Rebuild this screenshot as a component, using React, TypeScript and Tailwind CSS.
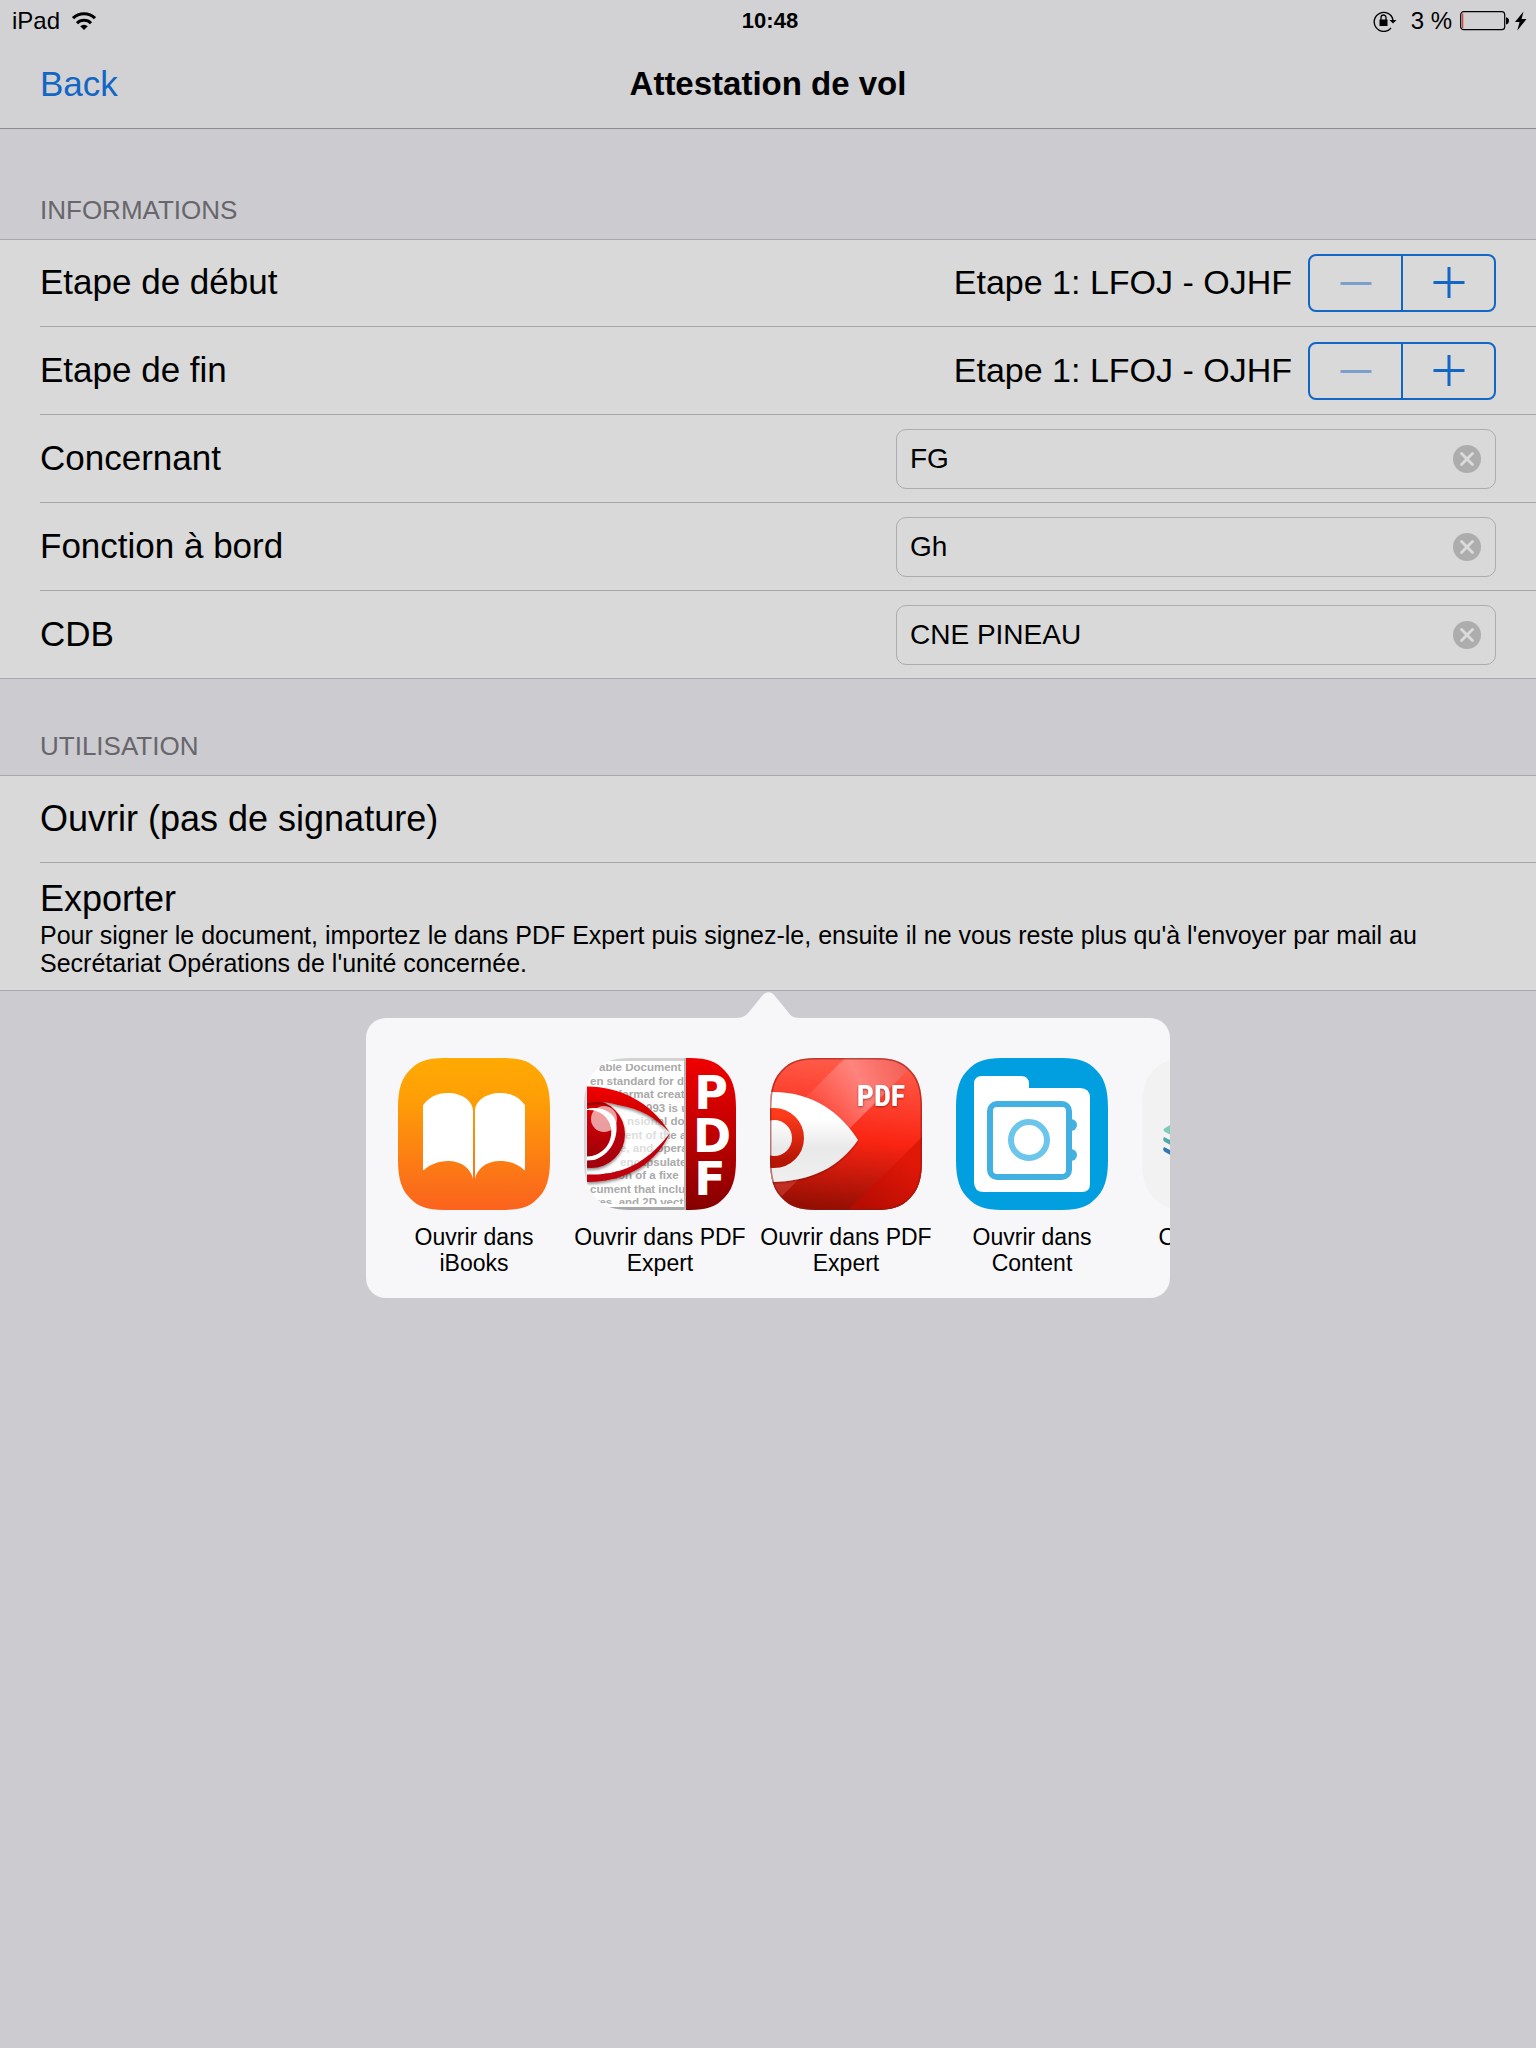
import { useState, type ReactNode } from "react";

function WifiIcon() {
  return (
    <svg viewBox="0 0 24 18" className="h-[18px] w-6" aria-label="Wi-Fi">
      <g fill="none" stroke="#000" strokeWidth="3">
        <path d="M1 6.2a15.6 15.6 0 0 1 22 0" />
        <path d="M5 11.2a10 10 0 0 1 14 0" />
      </g>
      <path d="M8.2 14.2a5.4 5.4 0 0 1 7.6 0L12 18z" />
    </svg>
  );
}

function RotationLockIcon() {
  return (
    <svg viewBox="0 0 24 22" className="h-[22px] w-6" aria-label="Rotation verrouillée">
      <path d="M18 18A9.5 9.5 0 1 1 20 10" fill="none" stroke="#000" strokeWidth="1.4" />
      <path d="M16.5 10h7L20 13.6z" />
      <rect x="6.5" y="9.5" width="8" height="6.5" />
      <path d="M8 10V7.5a2.5 2.5 0 0 1 5 0V10" fill="none" stroke="#000" strokeWidth="1.3" />
    </svg>
  );
}

function BatteryIcon() {
  return (
    <svg viewBox="0 0 68 20" className="h-5 w-[68px]" aria-label="Batterie en charge">
      <rect x="0.7" y="0.7" width="44" height="18" rx="3" fill="none" stroke="#000" strokeWidth="1.2" />
      <rect x="2" y="2.5" width="1.3" height="14.5" fill="#d8463c" />
      <path d="M46 6.2c2 .3 3 1.6 3 3.6s-1 3.300-3 3.600z" />
      <path d="M63.500 0.500L55 11h4.600l-2.300 8.500L66.500 8h-4.900z" />
    </svg>
  );
}

function StatusBar() {
  return (
    <div className="grid h-[42px] grid-cols-3 items-center pl-3 pr-2 text-[24px] leading-10">
      <div className="flex items-center gap-3">
        <span>iPad</span>
        <WifiIcon />
      </div>
      <time className="text-center text-[22px] font-bold">10:48</time>
      <div className="flex items-center justify-end">
        <RotationLockIcon />
        <span className="ml-3.5 mr-2 whitespace-pre">3 %</span>
        <BatteryIcon />
      </div>
    </div>
  );
}

function SectionHeader({ children, first }: { children: ReactNode; first?: boolean }) {
  return (
    <h2
      className={
        first
          ? "flex h-[110px] items-end px-10 pb-[11px] text-[26px] leading-9 text-[#67666b]"
          : "flex h-24 items-end px-10 pb-[11px] text-[26px] leading-9 text-[#67666b]"
      }
    >
      {children}
    </h2>
  );
}

function Group({ children }: { children: ReactNode }) {
  return (
    <section className="border-b border-[#a8a8ac] bg-[#d9d9d9] pl-10 shadow-[inset_0_1px_0_#a8a8ac]">
      <div className="-mb-px">{children}</div>
    </section>
  );
}

function Row({ children }: { children: ReactNode }) {
  return (
    <div className="flex h-[88px] items-center justify-between gap-4 border-b border-[#a8a8ac] pr-10 text-[35px]">
      {children}
    </div>
  );
}

function StepperRow({ id, label }: { id: string; label: string }) {
  const [step, setStep] = useState(1);
  return (
    <Row>
      <label htmlFor={id}>{label}</label>
      <div className="flex items-center gap-4">
        <output id={id} className="text-[34px]">{`Etape ${step}: LFOJ - OJHF`}</output>
        <div className="flex h-[58px] w-[188px] divide-x-2 divide-[#1266c4] rounded-lg border-2 border-[#1266c4]">
          <button
            type="button"
            aria-label="Moins"
            disabled={step === 1}
            onClick={() => setStep(step - 1)}
            className="flex flex-1 items-center justify-center text-[#1266c4] disabled:text-[#7a9fcb]"
          >
            <svg viewBox="0 0 32 32" className="size-8" stroke="currentColor" strokeWidth="3">
              <path d="M0.500 16.500h31" />
            </svg>
          </button>
          <button
            type="button"
            aria-label="Plus"
            onClick={() => setStep(step + 1)}
            className="flex flex-1 items-center justify-center text-[#1266c4]"
          >
            <svg viewBox="0 0 32 32" className="size-8" stroke="currentColor" strokeWidth="3">
              <path d="M0.500 15.500h31M16 0v31" />
            </svg>
          </button>
        </div>
      </div>
    </Row>
  );
}

function FieldRow({ id, label, initial }: { id: string; label: string; initial: string }) {
  const [value, setValue] = useState(initial);
  return (
    <Row>
      <label htmlFor={id}>{label}</label>
      <div className="flex h-[60px] w-[600px] items-center rounded-[10px] border border-[#acacac] pl-[13px] pr-3.5">
        <input
          id={id}
          type="text"
          value={value}
          onChange={(e) => setValue(e.target.value)}
          className="min-w-0 flex-1 bg-transparent text-[28px] leading-10 outline-none"
        />
        <button type="button" aria-label={`Effacer ${label}`} onClick={() => setValue("")}>
          <svg viewBox="0 0 28 28" className="size-7">
            <circle cx="14" cy="14" r="14" fill="#adadad" />
            <path d="M8.500 8.500l11 11M19.500 8.500l-11 11" stroke="#dcdcdc" strokeWidth="2.800" strokeLinecap="round" />
          </svg>
        </button>
      </div>
    </Row>
  );
}

const iconShape =
  "M52 0H100C118 0 128 1 137 9C149 19 152 32 152 50V102C152 120 149 133 137 143C128 151 118 152 100 152H52C34 152 24 151 15 143C3 133 0 120 0 102V50C0 32 3 19 15 9C24 1 34 0 52 0Z";

function BooksIcon() {
  return (
    <svg viewBox="0 0 152 152" className="size-[152px]" aria-hidden="true">
      <defs>
        <linearGradient id="books" x1="0" y1="0" x2="0" y2="1">
          <stop offset="0" stopColor="#ffa902" />
          <stop offset="0.25" stopColor="#fea006" />
          <stop offset="1" stopColor="#fb621e" />
        </linearGradient>
      </defs>
      <path d={iconShape} fill="url(#books)" />
      <path
        d="M75 121C73 111 64 103 50 103C40 103 31 107 26 112Q25 112.500 25 111V48Q25 47 26 46C32 38 41 35 50 35C64 35 75 43 75 53Z"
        fill="#fff"
      />
      <path
        d="M77 121C79 111 88 103 102 103C112 103 121 107 126 112Q127 112.500 127 111V48Q127 47 126 46C120 38 111 35 102 35C88 35 77 43 77 53Z"
        fill="#fff"
      />
    </svg>
  );
}

const documentLines: [number, string][] = [
  [15, "able Document"],
  [6, "en standard for d"],
  [34, "format creat"],
  [62, "993 is u"],
  [43, "nsional do"],
  [41, "ent of the a"],
  [36, "e, and opera"],
  [36, "encapsulate"],
  [20, "ption of a fixe"],
  [6, "cument that inclu"],
  [11, "res, and 2D vect"],
];

function PdfExpertClassicIcon() {
  return (
    <svg viewBox="0 0 152 152" className="size-[152px]" aria-hidden="true">
      <defs>
        <clipPath id="classic-shape">
          <path d={iconShape} />
        </clipPath>
        <clipPath id="classic-page">
          <rect x="3" y="6" width="98" height="140" />
        </clipPath>
        <linearGradient id="classic-band" x1="0" y1="0" x2="0" y2="1">
          <stop offset="0" stopColor="#f00000" />
          <stop offset="0.5" stopColor="#c00000" />
          <stop offset="1" stopColor="#850000" />
        </linearGradient>
        <linearGradient id="classic-lid" x1="0" y1="0" x2="0" y2="1">
          <stop offset="0" stopColor="#f20000" />
          <stop offset="1" stopColor="#b80000" />
        </linearGradient>
        <linearGradient id="classic-iris" x1="0" y1="0" x2="0" y2="1">
          <stop offset="0" stopColor="#dc0006" />
          <stop offset="1" stopColor="#a00008" />
        </linearGradient>
        <filter id="classic-shadow" x="-20%" y="-20%" width="140%" height="150%">
          <feDropShadow dx="0" dy="2" stdDeviation="1.500" floodColor="#000" floodOpacity="0.450" />
        </filter>
      </defs>
      <g clipPath="url(#classic-shape)">
        <rect width="152" height="152" fill="#fff" />
        <rect width="102" height="3" fill="#d2d2d2" />
        <rect y="149" width="102" height="3" fill="#a8a8a8" />
        <path d="M0 0h2.500v152H0z" fill="#d6d6d8" />
        <g clipPath="url(#classic-page)" fill="#a9a9a9" fontFamily="Liberation Sans, sans-serif" fontWeight="700" fontSize="11.5">
          {documentLines.map(([x, line], i) => (
            <text key={line} x={x} y={13 + i * 13.5}>
              {line}
            </text>
          ))}
        </g>
        <path d="M3 45H30C55 50 72 62 86 75C72 96 45 116 3 116Z" fill="#fff" fillOpacity="0.600" />
        <g clipPath="url(#classic-page)">
          <g filter="url(#classic-shadow)">
            <circle cx="7" cy="76" r="34" fill="url(#classic-iris)" />
          </g>
          <path d="M3 51C14 48 29 52 32 64C35 80 26 97 10 102L3 102.500Z" fill="#fff" />
          <path d="M3 52C14 51 25 58 27 70C29 84 20 95 8 98L3 98.500Z" fill="url(#classic-iris)" />
          <circle cx="20" cy="61" r="13" fill="#fff" fillOpacity="0.620" />
          <path
            d="M3 28.500C36 29 66 43 86 75C71 59 57 51 34 47C24 44 14 43 3 45Z"
            fill="url(#classic-lid)"
            filter="url(#classic-shadow)"
          />
          <path
            d="M86 75C74 102 46 124 3 124V116.500C42 118 66 101 86 75Z"
            fill="#c1000a"
            filter="url(#classic-shadow)"
          />
        </g>
        <rect x="100" width="2" height="152" fill="#b6b6b6" />
        <rect x="102" width="50" height="152" fill="url(#classic-band)" />
        <g fill="#fff" fontFamily="DejaVu Sans, sans-serif" fontWeight="700" fontSize="46" textAnchor="middle">
          <text x="127" y="51">P</text>
          <text x="128" y="94">D</text>
          <text x="126" y="137">F</text>
        </g>
      </g>
    </svg>
  );
}

function PdfExpertIcon() {
  return (
    <svg viewBox="0 0 152 152" className="size-[152px]" aria-hidden="true">
      <defs>
        <clipPath id="expert-shape">
          <path d={iconShape} />
        </clipPath>
        <linearGradient id="expert-base" x1="0.200" y1="0" x2="0.100" y2="1">
          <stop offset="0" stopColor="#ff5a48" />
          <stop offset="0.500" stopColor="#fa2412" />
          <stop offset="1" stopColor="#8c0c02" />
        </linearGradient>
        <linearGradient id="expert-glow" x1="0.300" y1="0.300" x2="0.900" y2="0">
          <stop offset="0" stopColor="#ff8078" stopOpacity="0.250" />
          <stop offset="0.500" stopColor="#ff8f8c" stopOpacity="0.800" />
          <stop offset="1" stopColor="#ee6058" stopOpacity="0.700" />
        </linearGradient>
        <linearGradient id="expert-corner" x1="0.300" y1="1" x2="0.800" y2="0.300">
          <stop offset="0" stopColor="#b80c02" />
          <stop offset="1" stopColor="#e01808" />
        </linearGradient>
        <linearGradient id="expert-eye" x1="0" y1="0" x2="0" y2="1">
          <stop offset="0.300" stopColor="#ffffff" />
          <stop offset="0.620" stopColor="#e9e9e9" />
          <stop offset="1" stopColor="#efefef" />
        </linearGradient>
        <linearGradient id="expert-ring" x1="0" y1="0" x2="0" y2="1">
          <stop offset="0" stopColor="#ff3b1c" />
          <stop offset="1" stopColor="#b51403" />
        </linearGradient>
        <filter id="expert-shadow" x="-20%" y="-20%" width="140%" height="150%">
          <feDropShadow dx="0" dy="1" stdDeviation="1" floodColor="#600" floodOpacity="0.600" />
        </filter>
      </defs>
      <g clipPath="url(#expert-shape)">
        <rect width="152" height="152" fill="url(#expert-base)" />
        <path d="M75 0H150L0 150V75Z" fill="url(#expert-glow)" />
        <path d="M152 79V152H78Z" fill="url(#expert-corner)" />
        <path
          d="M0 34C42 33 70 54 88 82C70 108 42 124 0 124Z"
          fill="url(#expert-eye)"
          filter="url(#expert-shadow)"
        />
        <circle cx="4" cy="80" r="24" fill="none" stroke="url(#expert-ring)" strokeWidth="12" />
        <text
          x="111"
          y="48"
          textAnchor="middle"
          fill="#fff"
          fontFamily="Roboto Condensed, Open Sans Condensed, Roboto, sans-serif"
          fontWeight="700"
          fontSize="30"
          filter="url(#expert-shadow)"
        >
          PDF
        </text>
        <path d={iconShape} fill="none" stroke="#8c1a12" strokeOpacity="0.550" strokeWidth="3" />
      </g>
    </svg>
  );
}

function ContentIcon() {
  return (
    <svg viewBox="0 0 152 152" className="size-[152px]" aria-hidden="true">
      <path d={iconShape} fill="#019fdf" />
      <path
        d="M26 18H65Q73 18 73 26V30H124Q134 30 134 40V126Q134 134 126 134H28Q18 134 18 124V26Q18 18 26 18Z"
        fill="#fff"
      />
      <circle cx="115" cy="67" r="6" fill="#42b1e2" />
      <circle cx="115" cy="97" r="6" fill="#42b1e2" />
      <rect x="34" y="46" width="79" height="73" rx="7" fill="#fff" stroke="#42b1e2" strokeWidth="6" />
      <circle cx="73" cy="82" r="18" fill="none" stroke="#6cc5ea" strokeWidth="6" />
    </svg>
  );
}

function LayersIcon() {
  return (
    <svg viewBox="0 0 152 152" className="size-[152px]" aria-hidden="true">
      <path d={iconShape} fill="#f2f2f3" />
      <path d="M23 74Q20 72 23 70L76 38L129 70Q132 72 129 74L76 100Z" fill="#7fcdb8" />
      <path d="M22 79Q20 82 23 84L76 114L129 84V79L76 107Z" fill="#4fa9ac" />
      <path d="M22 89Q20 92 23 94L76 124L129 94V89L76 117Z" fill="#2f78b4" />
    </svg>
  );
}

function ShareItem({ icon, app }: { icon: ReactNode; app: string }) {
  return (
    <li className="w-[186px] shrink-0">
      <button type="button" className="flex w-full flex-col items-center">
        {icon}
        <span className="mt-3.5 w-[176px] text-center text-[23px] leading-[26px]">Ouvrir dans {app}</span>
      </button>
    </li>
  );
}

function SharePopover() {
  return (
    <div className="absolute left-1/2 top-full w-[804px] -translate-x-1/2">
      <svg viewBox="0 0 64 27" className="mx-auto block h-[27px] w-16" aria-hidden="true">
        <path d="M0 27C7 27 9 25 13 21L26 5C30 0 35 0 39 5L52 21C55 25 57 27 64 27Z" fill="#f7f7f9" />
      </svg>
      <ul className="flex h-[280px] overflow-hidden rounded-[20px] bg-[#f7f7f9] pl-[15px] pt-10">
        <ShareItem icon={<BooksIcon />} app="iBooks" />
        <ShareItem icon={<PdfExpertClassicIcon />} app="PDF Expert" />
        <ShareItem icon={<PdfExpertIcon />} app="PDF Expert" />
        <ShareItem icon={<ContentIcon />} app="Content" />
        <ShareItem icon={<LayersIcon />} app="" />
      </ul>
    </div>
  );
}

export default function App() {
  return (
    <div className="min-h-screen bg-[#cccbd0] font-['Liberation_Sans',Arial,sans-serif] text-black">
      <header className="border-b border-[#8b8b90] bg-[#d2d2d4]">
        <StatusBar />
        <nav className="grid h-[86px] grid-cols-3 items-center px-10 pb-0.5 text-[35px]">
          <a href="#back" className="justify-self-start text-[#1266c4]">
            Back
          </a>
          <h1 className="whitespace-nowrap text-center text-[33px] font-bold">Attestation de vol</h1>
        </nav>
      </header>
      <main>
        <SectionHeader first>INFORMATIONS</SectionHeader>
        <Group>
          <StepperRow id="debut" label="Etape de début" />
          <StepperRow id="fin" label="Etape de fin" />
          <FieldRow id="concernant" label="Concernant" initial="FG" />
          <FieldRow id="fonction" label="Fonction à bord" initial="Gh" />
          <FieldRow id="cdb" label="CDB" initial="CNE PINEAU" />
        </Group>
        <SectionHeader>UTILISATION</SectionHeader>
        <div className="relative">
          <Group>
            <Row>
              <button type="button" className="flex-1 text-left text-[36px]">
                Ouvrir (pas de signature)
              </button>
            </Row>
            <button type="button" className="block w-full pb-3.5 pr-10 pt-4 text-left">
              <span className="block text-[36px] leading-10">Exporter</span>
              <span className="mt-0.5 block text-[25px] leading-7">
                Pour signer le document, importez le dans PDF Expert puis signez-le, ensuite il ne vous reste plus qu'à l'envoyer par mail au
                <br />
                Secrétariat Opérations de l'unité concernée.
              </span>
            </button>
          </Group>
          <SharePopover />
        </div>
      </main>
    </div>
  );
}
